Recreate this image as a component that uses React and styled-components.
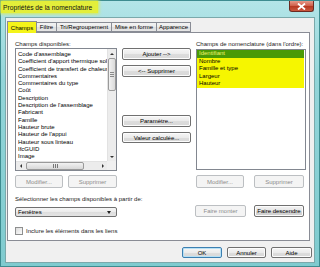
import React from "react";
import styled, { createGlobalStyle } from "styled-components";

const GlobalStyle = createGlobalStyle`
  html, body { margin: 0; padding: 0; }
  body {
    width: 320px;
    height: 267px;
    overflow: hidden;
    font-family: "Liberation Sans", Arial, sans-serif;
    font-size: 6px;
    color: #000;
  }
  * { box-sizing: border-box; }
`;

const available = [
  "Code d'assemblage",
  "Coefficient d'apport thermique solaire",
  "Coefficient de transfert de chaleur",
  "Commentaires",
  "Commentaires du type",
  "Coût",
  "Description",
  "Description de l'assemblage",
  "Fabricant",
  "Famille",
  "Hauteur brute",
  "Hauteur de l'appui",
  "Hauteur sous linteau",
  "IfcGUID",
  "Image",
  "Largeur",
];

const scheduled = ["Identifiant", "Nombre", "Famille et type", "Largeur", "Hauteur"];

const tabs = [
  { label: "Champs", w: 30, active: true },
  { label: "Filtre", w: 21 },
  { label: "Tri/Regroupement", w: 56 },
  { label: "Mise en forme", w: 46 },
  { label: "Apparence", w: 35 },
];

export default function App() {
  return (
    <>
      <GlobalStyle />
      <Window>
        <TitleBar>
          <Title>Propriétés de la nomenclature</Title>
          <CloseBtn>
            <svg width="9" height="7" viewBox="0 0 9 7">
              <path d="M1 0.5 L8 6.5 M8 0.5 L1 6.5" stroke="#fff" strokeWidth="1.8" />
            </svg>
          </CloseBtn>
        </TitleBar>
        <Client>
          <TabRow>
            {tabs.map((t) => (
              <Tab key={t.label} $w={t.w} $active={t.active}>
                {t.label}
              </Tab>
            ))}
          </TabRow>
          <Panel>
            <Columns>
              <Col $w={102}>
                <Label>Champs disponibles:</Label>
                <ListBox $h={123}>
                  <ListInner>
                    {available.map((a) => (
                      <Item key={a}>{a}</Item>
                    ))}
                  </ListInner>
                  <VScroll>
                    <Arrow $dir="up" />
                    <VThumb>
                      <GripV />
                    </VThumb>
                    <Spacer />
                    <Arrow $dir="down" />
                  </VScroll>
                  <HScroll>
                    <Arrow $dir="left" />
                    <HThumb>
                      <GripH />
                    </HThumb>
                    <Spacer />
                    <Arrow $dir="right" />
                  </HScroll>
                  <Corner />
                </ListBox>
                <BtnRow>
                  <Button $w={48} $h={13} disabled>Modifier...</Button>
                  <Button $w={49} $h={13} disabled>Supprimer</Button>
                </BtnRow>
              </Col>
              <MidCol>
                <Button $w={69} $h={12}>Ajouter --&gt;</Button>
                <Button $w={69} $h={12} $mt={5}>&lt;-- Supprimer</Button>
                <Button $w={69} $h={12} $mt={38}>Paramètre...</Button>
                <Button $w={69} $h={11} $mt={5}>Valeur calculée...</Button>
              </MidCol>
              <Col $w={110}>
                <Label>Champs de nomenclature (dans l'ordre):</Label>
                <ListBox $h={121} $mt={1}>
                  <OrderList>
                    {scheduled.map((s, i) => (
                      <OrderItem key={s} $sel={i === 0}>
                        {s}
                      </OrderItem>
                    ))}
                  </OrderList>
                </ListBox>
                <BtnRow $gap={10} $mt={5}>
                  <Button $w={48} $h={13} disabled>Modifier...</Button>
                  <Button $w={50} $h={13} disabled>Supprimer</Button>
                </BtnRow>
              </Col>
            </Columns>
            <SourceLabel>Sélectionner les champs disponibles à partir de:</SourceLabel>
            <SourceRow>
              <Select>
                <span>Fenêtres</span>
                <Caret />
              </Select>
              <MoveBtns>
                <Button $w={51} $h={12} disabled>Faire monter</Button>
                <Button $w={50} $h={12} $focus>Faire descendre</Button>
              </MoveBtns>
            </SourceRow>
            <CheckRow>
              <CheckBox />
              <span>Inclure les éléments dans les liens</span>
            </CheckRow>
          </Panel>
          <Footer>
            <Button $w={40} $h={11} $default>OK</Button>
            <Button $w={39} $h={11}>Annuler</Button>
            <Button $w={41} $h={11}>Aide</Button>
          </Footer>
        </Client>
      </Window>
    </>
  );
}

const Window = styled.div`
  width: 320px;
  height: 267px;
  border: 1px solid #3d8c90;
  background: linear-gradient(180deg, #b3e5e8 0%, #93d5d9 30%, #7fcbcf 100%);
  display: flex;
  flex-direction: column;
`;

const TitleBar = styled.div`
  height: 16px;
  display: flex;
  justify-content: space-between;
  align-items: flex-start;
`;

const Title = styled.div`
  height: 12px;
  padding: 0 6px 0 2px;
  display: flex;
  align-items: center;
  font-size: 6.7px;
  color: #111;
  background: #e3ee3a;
  box-shadow: 0 0 3px 1px #d9ec55;
`;

const CloseBtn = styled.div`
  width: 25px;
  height: 11px;
  margin-right: 5px;
  border: 1px solid #6a2a22;
  border-top: none;
  border-radius: 0 0 3px 3px;
  background: linear-gradient(180deg, #e59a8a 0%, #d0634e 45%, #b73a23 55%, #c9583f 100%);
  display: flex;
  align-items: center;
  justify-content: center;
`;

const Client = styled.div`
  flex: 1;
  margin: 0 4px 3px 4px;
  background: #f0f0f0;
  border: 1px solid #7aa9ab;
  padding: 3px 0 0 1px;
  display: flex;
  flex-direction: column;
`;

const TabRow = styled.div`
  display: flex;
  height: 11px;
  position: relative;
  z-index: 1;
`;

const Tab = styled.div`
  width: ${(p) => p.$w}px;
  height: ${(p) => (p.$active ? 12 : 10)}px;
  margin-top: ${(p) => (p.$active ? 0 : 1)}px;
  margin-right: -1px;
  border: 1px solid #898c95;
  border-bottom: ${(p) => (p.$active ? "none" : "1px solid #898c95")};
  background: ${(p) =>
    p.$active ? "#f4f41a" : "linear-gradient(180deg, #f3f3f3 0%, #ebebeb 50%, #dedede 51%, #e6e6e6 100%)"};
  display: flex;
  align-items: center;
  justify-content: center;
  font-size: 6px;
  white-space: nowrap;
`;

const Panel = styled.div`
  width: 303px;
  height: 209px;
  background: #fff;
  border: 1px solid #898c95;
  padding: 8px 0 0 7px;
`;

const Columns = styled.div`
  display: flex;
  gap: 5px;
`;

const Col = styled.div`
  width: ${(p) => p.$w}px;
  display: flex;
  flex-direction: column;
`;

const MidCol = styled.div`
  width: 69px;
  padding-top: 7px;
  display: flex;
  flex-direction: column;
`;

const Label = styled.div`
  height: 7px;
  line-height: 7px;
  font-size: 6px;
  color: #222;
  white-space: nowrap;
`;

const ListBox = styled.div`
  height: ${(p) => p.$h}px;
  margin-top: ${(p) => p.$mt || 0}px;
  border: 1px solid #828790;
  background: #fff;
  overflow: hidden;
  display: grid;
  grid-template-columns: 1fr 9px;
  grid-template-rows: 1fr 9px;
`;

const ListInner = styled.div`
  overflow: hidden;
  padding-top: 2px;
`;

const Item = styled.div`
  height: 7.3px;
  line-height: 7.3px;
  padding-left: 2px;
  white-space: nowrap;
  font-size: 6px;
`;

const OrderList = styled.div`
  grid-column: 1 / 3;
  grid-row: 1 / 3;
`;

const OrderItem = styled.div`
  height: 7.5px;
  line-height: 7.5px;
  margin-right: 1px;
  padding-left: 2px;
  font-size: 6px;
  background: ${(p) => (p.$sel ? "#4a9a06" : "#f6f600")};
  color: ${(p) => (p.$sel ? "#f3f36a" : "#000")};
`;

const VScroll = styled.div`
  background: #ececec;
  border-left: 1px solid #e2e2e2;
  display: flex;
  flex-direction: column;
  align-items: center;
`;

const HScroll = styled.div`
  background: #ececec;
  border-top: 1px solid #e2e2e2;
  display: flex;
  align-items: center;
`;

const Corner = styled.div`
  background: #f0f0f0;
`;

const Spacer = styled.div`
  flex: 1;
`;

const Arrow = styled.div`
  width: 9px;
  height: 9px;
  flex: none;
  position: relative;
  &::after {
    content: "";
    position: absolute;
    left: 50%;
    top: 50%;
    transform: translate(-50%, -50%);
    border: 2px solid transparent;
    ${(p) =>
      p.$dir === "up"
        ? "border-bottom-color: #333; border-top-width: 0;"
        : p.$dir === "down"
        ? "border-top-color: #333; border-bottom-width: 0;"
        : p.$dir === "left"
        ? "border-right-color: #333; border-left-width: 0;"
        : "border-left-color: #333; border-right-width: 0;"}
  }
`;

const VThumb = styled.div`
  width: 8px;
  height: 33px;
  border: 1px solid #9a9a9a;
  border-radius: 2px;
  background: linear-gradient(90deg, #f2f2f2, #dadada);
  display: flex;
  align-items: center;
  justify-content: center;
`;

const GripV = styled.div`
  width: 4px;
  height: 5px;
  border-top: 1px solid #8a8a8a;
  border-bottom: 1px solid #8a8a8a;
  background: linear-gradient(180deg, transparent 40%, #8a8a8a 40%, #8a8a8a 60%, transparent 60%);
`;

const HThumb = styled.div`
  width: 58px;
  height: 8px;
  margin-left: 1px;
  border: 1px solid #9a9a9a;
  border-radius: 2px;
  background: linear-gradient(180deg, #f2f2f2, #d8d8d8);
  display: flex;
  align-items: center;
  justify-content: center;
`;

const GripH = styled.div`
  width: 5px;
  height: 4px;
  border-left: 1px solid #777;
  border-right: 1px solid #777;
  background: linear-gradient(90deg, transparent 40%, #777 40%, #777 60%, transparent 60%);
`;

const BtnRow = styled.div`
  display: flex;
  gap: ${(p) => p.$gap || 5}px;
  margin-top: ${(p) => p.$mt || 4}px;
`;

const Button = styled.div`
  width: ${(p) => p.$w}px;
  height: ${(p) => p.$h}px;
  margin-top: ${(p) => p.$mt || 0}px;
  flex: none;
  border: 1px solid ${(p) => (p.disabled ? "#bcbfc2" : p.$default ? "#3c7fb1" : "#707070")};
  border-radius: 2px;
  background: ${(p) =>
    p.disabled
      ? "#f4f4f4"
      : p.$focus
      ? "linear-gradient(180deg, #f2f2f2 0%, #e6e6e6 50%, #d6d6d6 51%, #cfcfcf 100%)"
      : "linear-gradient(180deg, #f6f6f6 0%, #ebebeb 50%, #dddddd 51%, #d8d8d8 100%)"};
  box-shadow: ${(p) =>
    p.$default ? "inset 0 0 0 1px #b6e0f5" : p.disabled ? "none" : "inset 0 0 0 1px #fcfcfc"};
  color: ${(p) => (p.disabled ? "#8d8d8d" : "#000")};
  font-size: 6px;
  display: flex;
  align-items: center;
  justify-content: center;
  white-space: nowrap;
`;

const SourceLabel = styled.div`
  margin-top: 8px;
  height: 7px;
  line-height: 7px;
  font-size: 6px;
  color: #222;
`;

const SourceRow = styled.div`
  display: flex;
  align-items: flex-start;
  margin-top: 2px;
`;

const Select = styled.div`
  width: 102px;
  height: 10px;
  margin-top: 2px;
  border: 1px solid #707070;
  border-radius: 2px;
  background: linear-gradient(180deg, #f6f6f6 0%, #ebebeb 50%, #dddddd 51%, #e4e4e4 100%);
  display: flex;
  align-items: center;
  justify-content: space-between;
  padding: 0 5px 0 2px;
  font-size: 6px;
`;

const Caret = styled.div`
  width: 0;
  height: 0;
  border-left: 2.5px solid transparent;
  border-right: 2.5px solid transparent;
  border-top: 3px solid #222;
`;

const MoveBtns = styled.div`
  display: flex;
  gap: 8px;
  margin-left: 78px;
`;

const CheckRow = styled.div`
  display: flex;
  align-items: center;
  gap: 3px;
  margin-top: 10px;
  font-size: 6px;
  color: #222;
`;

const CheckBox = styled.div`
  width: 8px;
  height: 8px;
  border: 1px solid #8e8f8f;
  background: linear-gradient(135deg, #dcdcdc, #fbfbfb);
`;

const Footer = styled.div`
  display: flex;
  justify-content: flex-end;
  gap: 5px;
  padding: 6px 2px 0 0;
`;
